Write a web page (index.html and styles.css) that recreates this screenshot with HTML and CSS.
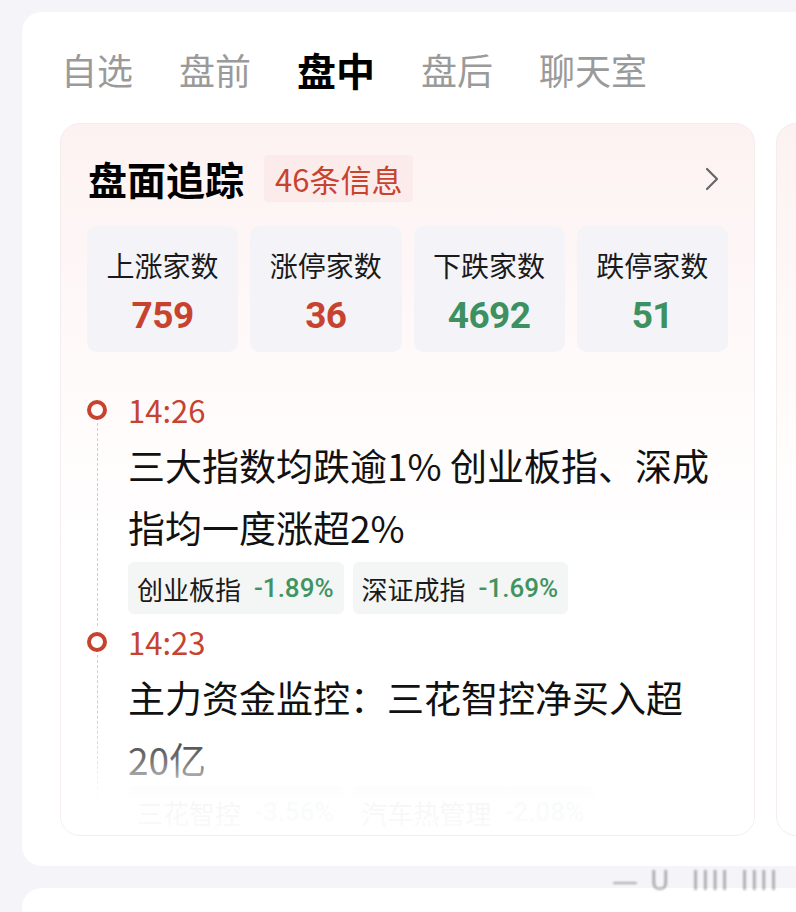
FILE: index.html
```html
<!DOCTYPE html>
<html lang="zh-CN">
<head>
<meta charset="utf-8">
<title>盘中</title>
<link rel="stylesheet" href="styles.css">
</head>
<body>
<div class="page">
  <section class="main-card">
    <nav class="tabs">
      <span class="tab">自选</span>
      <span class="tab">盘前</span>
      <span class="tab active">盘中</span>
      <span class="tab">盘后</span>
      <span class="tab">聊天室</span>
    </nav>
    <div class="carousel">
      <article class="track-card">
        <header class="track-head">
          <h2 class="track-title">盘面追踪</h2>
          <span class="badge">46条信息</span>
          <svg class="chevron" width="16" height="26" viewBox="0 0 16 26"><polyline points="3,3 13,13 3,23" fill="none" stroke="#666" stroke-width="2.2" stroke-linecap="round" stroke-linejoin="round"/></svg>
        </header>
        <div class="stats">
          <div class="stat"><span class="stat-label">上涨家数</span><span class="stat-num up">759</span></div>
          <div class="stat"><span class="stat-label">涨停家数</span><span class="stat-num up">36</span></div>
          <div class="stat"><span class="stat-label">下跌家数</span><span class="stat-num down">4692</span></div>
          <div class="stat"><span class="stat-label">跌停家数</span><span class="stat-num down">51</span></div>
        </div>
        <div class="timeline">
          <div class="item">
            <div class="rail"><span class="dot"></span><span class="dash"></span></div>
            <div class="item-body">
              <div class="time">14:26</div>
              <p class="headline">三大指数均跌逾1% 创业板指、深成指均一度涨超2%</p>
              <div class="tags">
                <span class="tag"><span class="tag-name">创业板指</span><span class="tag-val">-1.89%</span></span>
                <span class="tag"><span class="tag-name">深证成指</span><span class="tag-val">-1.69%</span></span>
              </div>
            </div>
          </div>
          <div class="item">
            <div class="rail"><span class="dot"></span><span class="dash"></span></div>
            <div class="item-body">
              <div class="time">14:23</div>
              <p class="headline">主力资金监控：三花智控净买入超20亿</p>
              <div class="tags faint">
                <span class="tag"><span class="tag-name">三花智控</span><span class="tag-val">-3.56%</span></span>
                <span class="tag"><span class="tag-name">汽车热管理</span><span class="tag-val">-2.08%</span></span>
              </div>
            </div>
          </div>
        </div>
        <div class="fade"></div>
      </article>
      <article class="next-card"></article>
    </div>
  </section>
  <section class="second-card"></section>
  <span class="watermark">— U &nbsp;IIII IIII</span>
</div>
</body>
</html>
```
FILE: styles.css
```css
html, body {
  margin: 0;
  padding: 0;
  overflow: hidden;
  background: #f4f4f9;
}
body {
  font-family: "Noto Sans CJK SC", "Noto Sans", sans-serif;
  color: #111;
}
.page {
  position: relative;
  width: 796px;
  height: 912px;
  overflow: hidden;
  padding-top: 12px;
  box-sizing: border-box;
}
.main-card {
  margin-left: 22px;
  width: 810px;
  background: #fff;
  border-radius: 20px;
  padding: 34px 0 30px 0;
  box-sizing: border-box;
}
.tabs {
  display: flex;
  align-items: center;
  gap: 46px;
  padding-left: 39px;
  height: 46px;
}
.tab {
  font-size: 36px;
  line-height: 46px;
  color: #9a9a9a;
}
.tab.active {
  font-size: 39px;
  font-weight: 700;
  color: #000;
}
.carousel {
  display: flex;
  gap: 21px;
  margin-top: 31px;
  margin-left: 38px;
}
.track-card {
  position: relative;
  flex: 0 0 695px;
  height: 713px;
  box-sizing: border-box;
  border: 1px solid #f3eded;
  border-radius: 20px;
  background: linear-gradient(180deg, #fdf2f2 0px, #fffafa 260px, #ffffff 420px);
  padding: 31px 26px 0 26px;
  overflow: hidden;
}
.next-card {
  flex: 0 0 300px;
  height: 713px;
  box-sizing: border-box;
  border: 1px solid #f3eded;
  border-radius: 20px;
  background: linear-gradient(180deg, #fdf2f2 0px, #fffafa 260px, #ffffff 420px);
}
.track-head {
  display: flex;
  align-items: center;
  height: 47px;
}
.track-title {
  margin: 0;
  font-size: 39px;
  font-weight: 700;
  line-height: 47px;
  padding-left: 1px;
  color: #000;
}
.badge {
  margin-left: 20px;
  height: 47px;
  line-height: 47px;
  padding: 0 11px;
  background: #fbeceb;
  color: #c8432f;
  font-size: 31px;
  border-radius: 4px;
}
.chevron {
  margin-left: auto;
  margin-right: 8px;
}
.stats {
  display: grid;
  grid-template-columns: repeat(4, 1fr);
  gap: 12px;
  margin-top: 24px;
}
.stat {
  height: 126px;
  box-sizing: border-box;
  padding-top: 21px;
  background: #f3f3f8;
  border-radius: 10px;
  display: flex;
  flex-direction: column;
  align-items: center;
  gap: 11px;
}
.stat-label {
  font-size: 28px;
  line-height: 36px;
  color: #1a1a1a;
}
.stat-num {
  font-family: Roboto, "DejaVu Sans", sans-serif;
  font-weight: 700;
  font-size: 37px;
  line-height: 44px;
  letter-spacing: -0.5px;
}
.up { color: #c8432f; }
.down { color: #3d9160; }
.timeline {
  margin-top: 40px;
  display: flex;
  flex-direction: column;
  gap: 10px;
}
.item {
  display: flex;
  gap: 21px;
}
.rail {
  flex: 0 0 20px;
  display: flex;
  flex-direction: column;
  align-items: center;
}
.dot {
  width: 20px;
  height: 20px;
  box-sizing: border-box;
  border: 4px solid #c5432f;
  border-radius: 50%;
  margin-top: 8px;
}
.dash {
  flex: 1;
  width: 0;
  margin-top: 3px;
  margin-bottom: -12px;
  border-left: 1.5px dashed #cfcfcf;
}
.item-body {
  flex: 1;
  min-width: 0;
}
.time {
  font-size: 31px;
  line-height: 36px;
  color: #c5432f;
}
.headline {
  margin: 6px 0 0 0;
  font-size: 37px;
  line-height: 62px;
  color: #111;
  width: 590px;
}
.tags {
  display: flex;
  gap: 9px;
  margin-top: 4px;
}
.tag {
  display: flex;
  align-items: center;
  gap: 13px;
  height: 52px;
  padding: 0 10px 0 9px;
  background: #f4f5f5;
  border-radius: 6px;
}
.tag-name {
  font-size: 26px;
  color: #1a1a1a;
}
.tag-val {
  font-family: Roboto, "Noto Sans", sans-serif;
  font-size: 26px;
  font-weight: 500;
  color: #3f9462;
}
.tags.faint {
  margin-top: -4px;
}
.fade {
  position: absolute;
  left: 0;
  right: 0;
  bottom: 0;
  height: 120px;
  background: linear-gradient(180deg, rgba(255,255,255,0) 0%, rgba(255,255,255,0.45) 40%, rgba(255,255,255,0.96) 70%, rgba(255,255,255,0.98) 100%);
  pointer-events: none;
}
.second-card {
  margin-top: 22px;
  margin-left: 22px;
  width: 810px;
  height: 60px;
  background: #fff;
  border-radius: 20px;
}
.watermark {
  position: absolute;
  left: 612px;
  top: 866px;
  font-family: "DejaVu Sans", sans-serif;
  font-size: 26px;
  line-height: 30px;
  color: rgba(90, 90, 90, 0.5);
  letter-spacing: 2px;
  filter: blur(1px);
  white-space: nowrap;
}
```
